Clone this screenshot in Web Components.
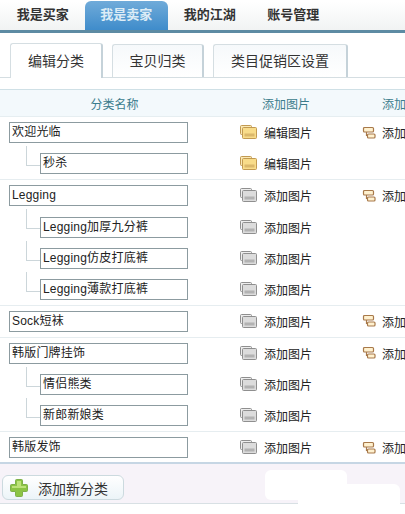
<!DOCTYPE html>
<html lang="zh">
<head>
<meta charset="utf-8">
<title>分类管理</title>
<style>
html, body { margin: 0; padding: 0; background: #fff; overflow: hidden; }
body { width: 405px; height: 514px; font-family: "Liberation Sans", "Noto Sans CJK SC", sans-serif; color: #222; }
</style>
</head>
<body>
<top-nav></top-nav>
<sub-tabs></sub-tabs>
<cat-table>
  <cat-row edit more>欢迎光临</cat-row>
  <cat-row child edit last>秒杀</cat-row>
  <cat-row more>Legging</cat-row>
  <cat-row child>Legging加厚九分裤</cat-row>
  <cat-row child>Legging仿皮打底裤</cat-row>
  <cat-row child last>Legging薄款打底裤</cat-row>
  <cat-row more last>Sock短袜</cat-row>
  <cat-row more>韩版门牌挂饰</cat-row>
  <cat-row child>情侣熊类</cat-row>
  <cat-row child last>新郎新娘类</cat-row>
  <cat-row more>韩版发饰</cat-row>
</cat-table>
<cat-footer></cat-footer>

<script>
const FOLDER = (a, b, c) => /*html*/`
<svg width="18" height="15" viewBox="0 0 18 15">
  <rect x="0.5" y="0.5" width="11" height="9" rx="1" fill="${b}" stroke="${c}"/>
  <rect x="2.5" y="2.5" width="14" height="11" rx="1" fill="${a}" stroke="${c}"/>
  <rect x="4.5" y="8.5" width="10" height="3" fill="${c}" opacity=".55"/>
</svg>`;

const LINKED = /*html*/`
<svg width="14" height="14" viewBox="0 0 14 14" fill="#fff1cf" stroke="#a8794a" stroke-width="1.2">
  <rect x="1.5" y="1.5" width="10" height="4.5" rx="1"/>
  <path d="M4.5 6v3.5h1" fill="none"/>
  <rect x="5.5" y="8" width="7.5" height="4" rx="1"/>
</svg>`;

const PLUS = /*html*/`
<svg width="20" height="20" viewBox="0 0 20 20">
  <path d="M7.5 1.5h5a1 1 0 0 1 1 1v4h4a1 1 0 0 1 1 1v5a1 1 0 0 1-1 1h-4v4a1 1 0 0 1-1 1h-5a1 1 0 0 1-1-1v-4h-4a1 1 0 0 1-1-1v-5a1 1 0 0 1 1-1h4v-4a1 1 0 0 1 1-1z" fill="#8cc444" stroke="#7fb14a"/>
  <path d="M8 3h4v5h-4z M3 8h14v2h-14z" fill="#bde27a"/>
</svg>`;

class TopNav extends HTMLElement {
    constructor() {
        super();
        this.attachShadow({ mode: 'open' }).innerHTML = /*html*/`
<style>
:host { display: flex; height: 28px; margin-top: 2px; padding-left: 1px; border-bottom: 3px solid #5d8ba3;
        background: linear-gradient(#fff, #f1f3f3); font-size: 13px; font-weight: bold; }
a { width: 83.5px; display: flex; align-items: center; justify-content: center; color: #333; padding-bottom: 5px; box-sizing: border-box; }
a.on { margin-top: -1px; color: #dcecf6; border-radius: 6px 6px 0 0; background: linear-gradient(#70abd9, #3f8ccb); }
</style>
<a>我是买家</a><a class="on">我是卖家</a><a>我的江湖</a><a>账号管理</a>`;
    }
}

class SubTabs extends HTMLElement {
    constructor() {
        super();
        this.attachShadow({ mode: 'open' }).innerHTML = /*html*/`
<style>
:host { display: flex; gap: 9px; height: 33px; margin-top: 11px; padding-left: 10px; border-bottom: 1px solid #d5dee2; font-size: 14px; color: #333; }
a { box-sizing: border-box; height: 33px; display: flex; align-items: center; justify-content: center; padding-bottom: 2px;
    border: 1px solid #d5dee2; border-bottom: 0; border-right: 2px solid #c5d2d9; border-radius: 3px 3px 0 0; background: linear-gradient(#f6f9fb, #fff); }
a.on { height: 35px; margin-top: -1px; background: #fff; }
</style>
<a class="on" style="width:93px">编辑分类</a><a style="width:92px">宝贝归类</a><a style="width:135px">类目促销区设置</a>`;
    }
}

class CatTable extends HTMLElement {
    constructor() {
        super();
        this.attachShadow({ mode: 'open' }).innerHTML = /*html*/`
<style>
:host { display: block; margin-top: 11px; }
.head { display: flex; box-sizing: border-box; height: 28px; align-items: center; font-size: 12px; color: #3b7c8c; background: #f3f9fc;
        border-top: 1px solid #cfe0e6; border-bottom: 1px solid #e6eef1; white-space: nowrap; overflow-x: clip; }
.head span { flex: none; }
.head span:nth-child(1) { width: 229px; text-align: center; }
.head span:nth-child(2) { width: 153px; padding-left: 33px; box-sizing: border-box; }
</style>
<div class="head"><span>分类名称</span><span>添加图片</span><span>添加图片</span></div>
<div class="body"><slot></slot></div>`;
    }
}

class CatRow extends HTMLElement {
    constructor() {
        super();
        const child = this.hasAttribute("child");
        const edit = this.hasAttribute("edit");
        const last = this.hasAttribute("last");
        const more = this.hasAttribute("more");
        this.attachShadow({ mode: 'open' }).innerHTML = /*html*/`
<style>
:host { display: flex; box-sizing: border-box; height: 31.5px; align-items: center; font-size: 12px; white-space: nowrap; color: #222; overflow-x: clip;
        padding-left: 9px; ${last ? "border-bottom: 1px solid #e6edf0;" : ""} }
.tree { width: 14px; height: 20px; margin: -16px 0 0 17px; box-sizing: border-box; border-left: 1px solid #ccd6da; border-bottom: 1px solid #ccd6da; flex: none; }
.name { box-sizing: border-box; width: ${child ? 148 : 179}px; height: 21px; line-height: 19px; padding-left: 2px; flex: none;
        border: 1px solid #8c9ba0; background: #fff; letter-spacing: .2px; }
.pic { display: flex; align-items: center; flex: none; margin-left: 52px; width: 122px; }
svg { flex: none; margin-right: 6px; }
.more { display: flex; align-items: center; flex: none; }
</style>
${child ? '<div class="tree"></div>' : ''}
<div class="name"><slot></slot></div>
<div class="pic">${edit ? FOLDER("#f8dc8a", "#fbe9b4", "#c29a52") : FOLDER("#dcdcdc", "#eeeeee", "#8f8f8f")}<span>${edit ? "编辑图片" : "添加图片"}</span></div>
${more ? `<div class="more">${LINKED}<span>添加图片</span></div>` : ''}`;
    }
}

class CatFooter extends HTMLElement {
    constructor() {
        super();
        this.attachShadow({ mode: 'open' }).innerHTML = /*html*/`
<style>
:host { display: block; position: relative; box-sizing: border-box; height: 42px; margin-top: -1.5px; padding: 11px 0 0 2px; background: #f7f3f9;
        border-top: 2px solid #c6d6e4; border-bottom: 1px solid #d8e0e4; }
button { box-sizing: border-box; display: flex; align-items: center; width: 122px; height: 25px; padding: 0 0 0 6px; font: 14px "Liberation Sans", "Noto Sans CJK SC", sans-serif; color: #333;
         border: 1px solid #ccdadf; border-radius: 6px; background: linear-gradient(#fff, #ecf4f8); }
svg { margin-right: 9px; }
.mask { position: absolute; background: #fff; border-radius: 6px; }
</style>
<button>${PLUS}添加新分类</button>
<div class="mask" style="left:265px;top:6px;width:82px;height:30px"></div>
<div class="mask" style="left:298px;top:20px;width:102px;height:28px"></div>`;
    }
}

customElements.define('top-nav', TopNav);
customElements.define('sub-tabs', SubTabs);
customElements.define('cat-table', CatTable);
customElements.define('cat-row', CatRow);
customElements.define('cat-footer', CatFooter);
</script>
</body>
</html>
